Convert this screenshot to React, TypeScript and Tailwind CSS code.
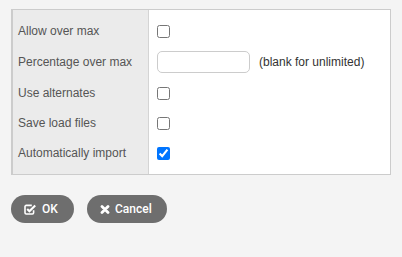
import React from "react";

interface Row {
  label: string;
  kind: "check" | "input";
  checked?: boolean;
}

const rows: Row[] = [
  { label: "Allow over max", kind: "check" },
  { label: "Percentage over max", kind: "input" },
  { label: "Use alternates", kind: "check" },
  { label: "Save load files", kind: "check" },
  { label: "Automatically import", kind: "check", checked: true },
];

// check-square-o style icon
const CheckSquareIcon = () => (
  <svg width="12" height="11" viewBox="0 0 12 11" fill="none">
    <path
      d="M9.6 6.2v2.6a1.2 1.2 0 0 1-1.2 1.2H2.2A1.2 1.2 0 0 1 1 8.8V2.6a1.2 1.2 0 0 1 1.2-1.2h5.6"
      stroke="white"
      strokeWidth="1.6"
    />
    <path d="M3.2 5l2.2 2.2L11.2 1.4" stroke="white" strokeWidth="2.1" />
  </svg>
);

const TimesIcon = () => (
  <svg width="10" height="9" viewBox="0 0 10 9" fill="none">
    <path
      d="M2 1.5l6 6M8 1.5l-6 6"
      stroke="white"
      strokeWidth="2.8"
      strokeLinecap="round"
    />
  </svg>
);

const App = () => {
  return (
    <div className="min-h-[257px] w-[402px] bg-[#f4f4f4] pt-[9px] pl-[11px] font-['Liberation_Sans',Arial,sans-serif] text-[12px]">
      <div className="flex w-[380px] border border-l-2 border-[#cccccc] bg-white">
        {/* labels */}
        <div className="flex w-[136px] flex-col border-r border-[#d4d4d4] bg-[#ebebeb] py-[6px] pl-[5px] text-[#555555]">
          {rows.map((r) => (
            <div
              key={r.label}
              className={`flex items-center ${r.kind === "input" ? "h-[32px]" : "h-[30px]"}`}
            >
              {r.label}
            </div>
          ))}
        </div>
        {/* values */}
        <div className="flex flex-1 flex-col py-[6px] pl-[8px] text-[#333333]">
          {rows.map((r) =>
            r.kind === "input" ? (
              <div key={r.label} className="flex h-[32px] items-center gap-[9px]">
                <input
                  type="text"
                  className="h-[22px] w-[93px] rounded-[5px] border border-[#cccccc] bg-white px-2 outline-none"
                />
                <span>(blank for unlimited)</span>
              </div>
            ) : (
              <div key={r.label} className="flex h-[30px] items-center">
                <input
                  type="checkbox"
                  defaultChecked={r.checked}
                  className="m-0 h-[13px] w-[13px]"
                />
              </div>
            )
          )}
        </div>
      </div>

      <div className="mt-[20px] flex gap-[13px] font-['Roboto',sans-serif]">
        <button className="flex h-[28px] w-[63px] items-center gap-[6px] rounded-full bg-[#6e6e6e] pl-[13px] text-[12px] font-medium text-white">
          <CheckSquareIcon />
          OK
        </button>
        <button className="flex h-[28px] w-[80px] items-center gap-[5px] rounded-full bg-[#6e6e6e] pl-[13px] text-[12px] font-medium text-white">
          <TimesIcon />
          Cancel
        </button>
      </div>
    </div>
  );
};

export default App;
